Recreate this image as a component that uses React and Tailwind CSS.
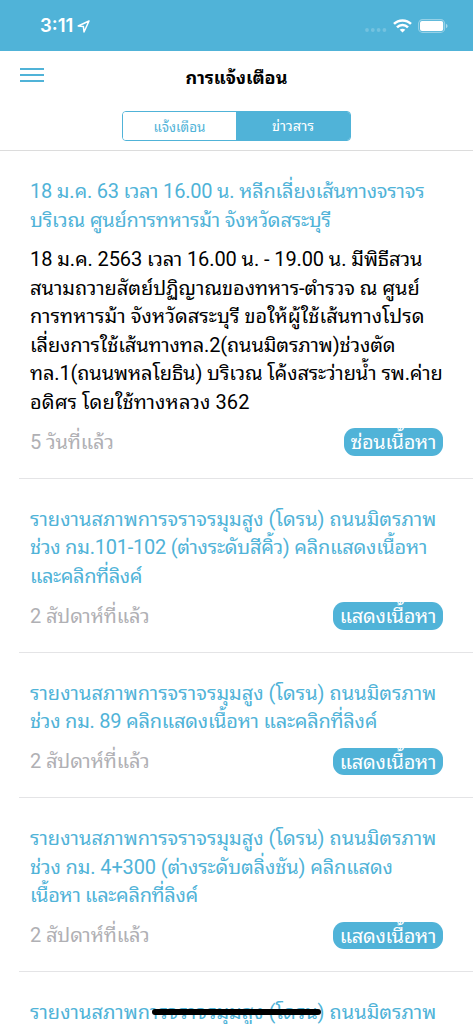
import React from 'react'

const drone = { text: 'รายงานสภาพการจราจรมุมสูง (โดรน) ถนนมิตรภาพ' }

const news = [
  {
    title: [
      { text: '18 ม.ค. 63 เวลา 16.00 น. หลีกเลี่ยงเส้นทางจราจร', tracking: 'tracking-[-0.2px]' },
      { text: 'บริเวณ ศูนย์การทหารม้า จังหวัดสระบุรี', tracking: 'tracking-[-0.2px]' },
    ],
    body: [
      { text: '18 ม.ค. 2563 เวลา 16.00 น. - 19.00 น. มีพิธีสวน', tracking: 'tracking-[-0.1px]' },
      { text: 'สนามถวายสัตย์ปฏิญาณของทหาร-ตำรวจ ณ ศูนย์', tracking: 'tracking-[-0.04px]' },
      { text: 'การทหารม้า จังหวัดสระบุรี ขอให้ผู้ใช้เส้นทางโปรด', tracking: 'tracking-[0.06px]' },
      { text: 'เลี่ยงการใช้เส้นทางทล.2(ถนนมิตรภาพ)ช่วงตัด', tracking: 'tracking-[-0.13px]' },
      { text: 'ทล.1(ถนนพหลโยธิน) บริเวณ โค้งสระว่ายน้ำ รพ.ค่าย', tracking: 'tracking-[-0.12px]' },
      { text: 'อดิศร โดยใช้ทางหลวง 362', tracking: 'tracking-[0.1px]' },
    ],
    time: '5 วันที่แล้ว',
  },
  {
    title: [
      drone,
      { text: 'ช่วง กม.101-102 (ต่างระดับสีคิ้ว) คลิกแสดงเนื้อหา', tracking: 'tracking-[-0.24px]' },
      { text: 'และคลิกที่ลิงค์', tracking: 'tracking-[-0.4px]' },
    ],
    time: '2 สัปดาห์ที่แล้ว',
  },
  {
    title: [drone, { text: 'ช่วง กม. 89 คลิกแสดงเนื้อหา และคลิกที่ลิงค์', tracking: 'tracking-[-0.25px]' }],
    time: '2 สัปดาห์ที่แล้ว',
  },
  {
    title: [
      drone,
      { text: 'ช่วง กม. 4+300 (ต่างระดับตลิ่งชัน) คลิกแสดง', tracking: 'tracking-[-0.13px]' },
      { text: 'เนื้อหา และคลิกที่ลิงค์', tracking: 'tracking-[-0.33px]' },
    ],
    time: '2 สัปดาห์ที่แล้ว',
  },
  {
    title: [drone],
  },
]

function StatusBar() {
  return (
    <div className="flex h-[50.5px] shrink-0 items-center justify-between bg-[#50b3d8] pl-10 pr-[25px] pt-[2px] text-white">
      <div className="flex items-center gap-[4px]">
        <span className="font-['Inter',sans-serif] text-[18.5px] font-semibold">3:11</span>
        <svg className="h-[13px] w-[13px]" viewBox="0 0 13 13" fill="none" stroke="currentColor" strokeWidth="1.5" strokeLinejoin="round">
          <path d="M12 1 L1.2 6 L6.4 6.5 L7 12 Z" />
        </svg>
      </div>
      <div className="flex items-center">
        <svg className="mr-[6px] mt-2 h-1 w-[22px]" viewBox="0 0 22 4" fill="#fff" fillOpacity="0.2">
          <circle cx="2" cy="2" r="1.9" />
          <circle cx="7.8" cy="2" r="1.9" />
          <circle cx="13.6" cy="2" r="1.9" />
          <circle cx="19.4" cy="2" r="1.9" />
        </svg>
        <svg className="mr-[6px] h-[14px] w-[19px]" viewBox="0 0 19 14" fill="none" stroke="currentColor" strokeWidth="2.5">
          <path d="M1 4.9 C5.6 .3 13.4 .3 18 4.9" />
          <path d="M4 8.4 C7 5.3 12 5.3 15 8.4" />
          <path d="M9.5 13.6 L6.7 10.8 C8.2 9.3 10.8 9.3 12.3 10.8 Z" fill="currentColor" stroke="none" />
        </svg>
        <svg className="h-[14px] w-[30px]" viewBox="0 0 30 14">
          <rect x="0.6" y="0.6" width="26" height="12.8" rx="4" fill="none" stroke="#fff" strokeOpacity="0.4" strokeWidth="1.1" />
          <rect x="2" y="2" width="23.2" height="10" rx="2" fill="#fff" />
          <path d="M28 4.8 Q29.6 5.6 29.6 7 Q29.6 8.4 28 9.2 Z" fill="#fff" fillOpacity="0.5" />
        </svg>
      </div>
    </div>
  )
}

function Header() {
  return (
    <header className="h-[100.5px] shrink-0 border-b border-[#dcdcdc] px-5">
      <div className="grid h-[60px] grid-cols-3 items-start">
        <button aria-label="เมนู" className="mt-[17px] flex w-6 flex-col gap-1">
          <span className="h-[2px] w-6 bg-[#50b3d8]" />
          <span className="h-[2px] w-6 bg-[#50b3d8]" />
          <span className="h-[2px] w-6 bg-[#50b3d8]" />
        </button>
        <h1 className="mt-[13px] text-center text-[18px] font-bold leading-7 whitespace-nowrap">การแจ้งเตือน</h1>
      </div>
      <div className="mx-auto flex h-[30px] w-[229px] overflow-hidden rounded-[4px] border border-[#50b3d8] leading-[30px]">
        <button className="w-[113px] bg-white text-[13.5px] text-[#50b3d8]">แจ้งเตือน</button>
        <button className="flex-1 bg-[#50b3d8] text-[14.5px] text-white">ข่าวสาร</button>
      </div>
    </header>
  )
}

function Lines({ lines }) {
  return lines.map((line) => (
    <span key={line.text} className={`block ${line.tracking || ''}`}>{line.text}</span>
  ))
}

function NewsItem({ item }) {
  return (
    <article className="ml-[19px] shrink-0 border-b border-[#e4e4e6] pb-[22px] pl-[11px] pr-[30px] pt-[26px] text-[20px] leading-[28.5px] whitespace-nowrap">
      <h2 className="text-[#50b3d8]">
        <Lines lines={item.title} />
      </h2>
      {item.body && (
        <p className="mt-[11px] text-black">
          <Lines lines={item.body} />
        </p>
      )}
      {item.time && (
        <div className="mt-[12px] flex h-[27.5px] items-center justify-between">
          <span className="tracking-[-0.12px] text-[#b0b0b4]">{item.time}</span>
          <button className="h-[27.5px] overflow-hidden rounded-[11px] bg-[#50b3d8] px-[7px] leading-[28px] tracking-[-0.32px] text-white">
            {item.body ? 'ซ่อนเนื้อหา' : 'แสดงเนื้อหา'}
          </button>
        </div>
      )}
    </article>
  )
}

export default function App() {
  return (
    <div className="relative flex h-[1024px] w-full flex-col overflow-hidden bg-white font-['Roboto','Noto_Sans_Thai_Looped',sans-serif] text-black">
      <StatusBar />
      <Header />
      <main className="flex flex-col">
        {news.map((item, i) => (
          <NewsItem key={i} item={item} />
        ))}
      </main>
      <div className="absolute bottom-[9px] left-[152px] h-[6px] w-[169px] rounded-full bg-black" />
    </div>
  )
}
